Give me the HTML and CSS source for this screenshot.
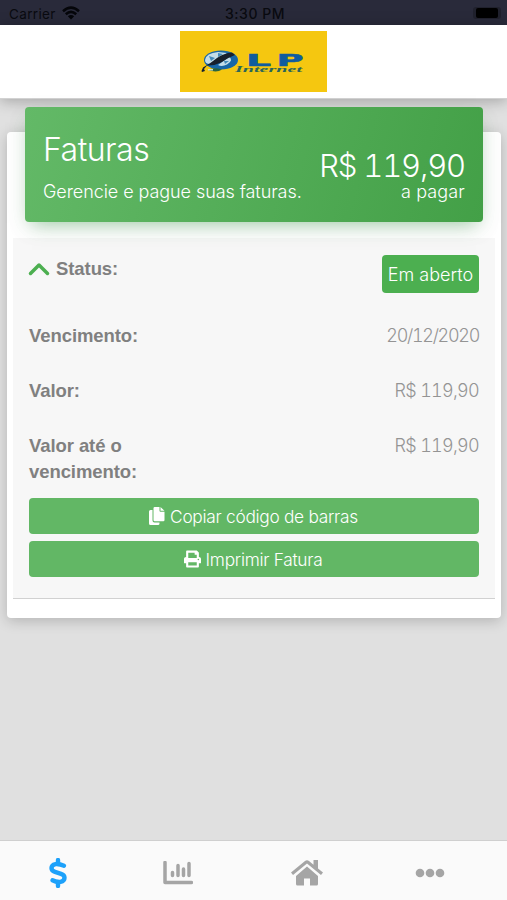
FILE: index.html
```html
<!DOCTYPE html>
<html lang="pt-BR">
<head>
<meta charset="utf-8">
<title>Faturas</title>
<link rel="stylesheet" href="styles.css">
</head>
<body>
<div class="status-bar">
  <div class="carrier"><span>Carrier</span>
    <svg class="wifi" viewBox="0 0 18 14"><path d="M1 5.2Q9-2 17 5.2" /><path d="M3.800 8.200Q9 3.600 14.200 8.200"/><path class="dot" d="M5.800 10.200Q9 7.600 12.200 10.200L9 13.600Z"/></svg>
  </div>
  <div class="clock">3:30 PM</div>
  <div class="battery"><span class="cell"></span></div>
</div>
<header class="header">
  <svg class="logo" viewBox="0 0 147 61">
    <rect width="147" height="61" fill="#f5c710"/>
    <ellipse cx="41" cy="29" rx="17" ry="9.500" fill="#1766a6"/>
    <path d="M25 29Q26 22 38 21L47 22 40 27 30 33Q25 33 25 29ZM38 34L49 26Q54 29 47 33.500 42 36 38 34Z" fill="#c4dde9"/>
    <path d="M29 25l6 2-4 3zM44 30l5 0-4 3zM38 22l5 1-5 3z" fill="#4389b9"/>
    <path d="M21.500 40L23 36.500Q31 32 37 27 44 22 52 21.500L55 24Q47 27 41 31.500 34 35 27 34.500L24 38 25 40 22 41Z" fill="#17202c"/>
    <path d="M28 39Q33 36 42 38.500 37 42 28 39Z" fill="#28643f"/><path d="M28 38h5v1.500h-5z" fill="#d6e5c7"/>
    <text class="logo-name" x="66" y="34.500" textLength="25" lengthAdjust="spacingAndGlyphs">L</text>
    <text class="logo-name" x="96.500" y="34.500" textLength="27" lengthAdjust="spacingAndGlyphs">P</text>
    <text class="logo-sub" x="55" y="41" textLength="67" lengthAdjust="spacingAndGlyphs">Internet</text>
  </svg>
</header>
<main class="content">
  <section class="card">
    <div class="card-header">
      <div class="heading"><h1 class="title">Faturas</h1><p class="subtitle">Gerencie e pague suas faturas.</p></div>
      <div class="total"><div class="amount">R$ 119,90</div><div class="caption">a pagar</div></div>
    </div>
    <div class="invoice">
      <div class="row row-status">
        <div class="label with-icon"><svg class="chevron" viewBox="0 0 22 14"><path d="M2.500 11.500L11 3 19.500 11.500"/></svg><span>Status:</span></div>
        <span class="badge">Em aberto</span>
      </div>
      <div class="row"><div class="label">Vencimento:</div><div class="value date">20/12/2020</div></div>
      <div class="row"><div class="label">Valor:</div><div class="value">R$ 119,90</div></div>
      <div class="row row-tall"><div class="label">Valor até o vencimento:</div><div class="value">R$ 119,90</div></div>
      <button class="button copy"><svg viewBox="0 0 16 18"><path d="M4 3H2Q.5 3 .5 4.500V16.500Q.5 18 2 18H9.500Q11 18 11 16.500V15.500H6Q4 15.500 4 13.500Z"/><path d="M6.200 0H11V3.800Q11 4.700 12 4.700H16V13Q16 14.200 14.800 14.200H6.200Q5 14.200 5 13V1.200Q5 0 6.200 0ZM12 0L16 3.800H12Z"/></svg><span>Copiar código de barras</span></button>
      <button class="button print"><svg viewBox="0 0 512 512"><path d="M448 192V77.250c0-8.490-3.370-16.620-9.370-22.630L393.370 9.370c-6-6-14.140-9.370-22.630-9.370H96C78.330 0 64 14.330 64 32v160c-35.350 0-64 28.650-64 64v112c0 8.840 7.160 16 16 16h48v96c0 17.670 14.330 32 32 32h320c17.670 0 32-14.330 32-32v-96h48c8.840 0 16-7.160 16-16V256c0-35.350-28.650-64-64-64zm-64 256H128v-96h256v96zm0-224H128V64h192v48c0 8.840 7.160 16 16 16h48v96zm48 72c-13.250 0-24-10.750-24-24 0-13.260 10.750-24 24-24s24 10.740 24 24c0 13.250-10.750 24-24 24z"/></svg><span>Imprimir Fatura</span></button>
    </div>
  </section>
</main>
<nav class="tabs">
  <a class="tab active"><svg class="dollar" viewBox="0 0 18 30"><path class="stem" d="M9 2V6M9 24V28"/><path class="curve" d="M15 7.700Q10 5.500 6.500 6.100 2.500 7 2.500 10 2.500 12.800 6 13.900L12 15.800Q15.500 17 15.500 19.700 15.500 23 11.500 23.900 7.500 24.500 3.500 22.300"/></svg></a>
  <a class="tab"><svg class="chart" viewBox="0 0 30 24"><path class="axis" d="M2 1.500V21.500H28.500"/><path class="bars" d="M9.500 11.500V14.500M15 4.500V14.500M20.500 8V14.500M26 2.500V14.500"/></svg></a>
  <a class="tab"><svg class="home" viewBox="0 0 34 28"><path d="M17 7.500L28 17V25Q28 26.500 26.500 26.500H20V19.500H14V26.500H7.500Q6 26.500 6 25V17Z"/><path d="M1 13.500L15 2Q17 .5 19 2L23.500 5.700V1H28V9.500L33 13.500 31 16 17 4.600 3 16Z"/></svg></a>
  <a class="tab"><svg class="more" viewBox="0 0 30 10"><circle cx="5" cy="5" r="4.300"/><circle cx="15" cy="5" r="4.300"/><circle cx="25" cy="5" r="4.300"/></svg></a>
</nav>
</body>
</html>
```
FILE: styles.css
```css
* { box-sizing: border-box; }
body { margin: 0; height: 900px; display: flex; flex-direction: column; overflow: hidden; background: #e0e0e0; font-family: "Liberation Sans", sans-serif; font-size: 18.5px; }
svg { display: block; flex: none; }
h1, p { margin: 0; font-weight: 300; }
.status-bar { height: 25px; flex: none; display: grid; grid-template-columns: 1fr auto 1fr; align-items: center; padding: 2px 6px 0 9px; background: #292a3a; color: #090a10; font-family: Inter, sans-serif; font-size: 13.5px; }
.carrier { display: flex; align-items: center; gap: 6px; letter-spacing: .35px; }
.wifi { width: 18px; height: 14px; margin-top: -2px; fill: none; stroke: #05060a; stroke-width: 2.5; }
.wifi .dot { fill: #05060a; stroke: none; }
.clock { font-weight: 500; font-size: 14px; letter-spacing: .5px; }
.battery { justify-self: end; width: 28px; height: 12px; margin-top: -2px; padding: 1px 3px; border-radius: 3px; background: #20212d; }
.cell { display: block; height: 10px; border-radius: 2px; background: #000; }
.header { height: 74px; flex: none; display: flex; justify-content: center; padding-top: 6px; background: #fff; border-bottom: 1px solid #d2d2d2; box-shadow: 0 2px 14px rgba(0,0,0,.28); }
.logo { width: 147px; height: 61px; }
.logo-name { font: bold 16px "DejaVu Sans", sans-serif; fill: #0f5c9e; stroke: #0f5c9e; stroke-width: .5; }
.logo-sub { font: italic bold 8.5px "Liberation Serif", serif; fill: #2a6558; }
.content { flex: 1; padding: 33px 6px 0 7px; }
.card { height: 486px; padding: 0 6px; background: #fff; border-radius: 4px; box-shadow: 0 3px 14px rgba(0,0,0,.2); }
.card-header { position: relative; z-index: 1; top: -25px; height: 115px; margin: 0 12px -25px; padding: 0 18px; display: flex; justify-content: space-between; background: linear-gradient(105deg, #63b967, #43a047); color: #fff; border-radius: 4px; box-shadow: 0 8px 18px -7px rgba(60,160,75,.5), 0 8px 24px rgba(0,0,0,.05); font-family: Inter, sans-serif; font-weight: 300; }
.title { padding-top: 23px; font-size: 32px; line-height: 39px; letter-spacing: -.5px; }
.subtitle { padding-top: 10px; font-size: 18px; line-height: 26px; letter-spacing: -.07px; white-space: nowrap; }
.total { padding-top: 41px; text-align: right; white-space: nowrap; }
.amount { font-size: 31px; line-height: 36px; letter-spacing: -1.15px; font-variant-numeric: tabular-nums; }
.caption { font-size: 18px; line-height: 15px; letter-spacing: .15px; }
.invoice { margin-top: 16px; height: 361px; padding: 17px 16px 0; background: #f7f7f7; border-bottom: 1px solid #d1d1d1; }
.row { display: flex; justify-content: space-between; align-items: flex-start; height: 55px; line-height: 25.5px; }
.row-status { height: 68px; }
.row-tall { height: 65px; }
.label { width: 130px; color: #808080; font-weight: 700; letter-spacing: -.08px; }
.with-icon { display: flex; align-items: center; gap: 6px; padding-top: 1px; }
.chevron { width: 22px; height: 14px; margin: 1px 0 0 -1px; fill: none; stroke: #4caf50; stroke-width: 3.5; stroke-linecap: round; stroke-linejoin: round; }
.value { color: #949494; font-family: Inter, sans-serif; font-weight: 300; font-size: 18px; white-space: nowrap; letter-spacing: -.7px; font-variant-numeric: tabular-nums; }
.date { letter-spacing: -1.3px; }
.badge { width: 97px; height: 38px; display: flex; align-items: center; justify-content: center; padding-top: 1px; background: #4caf50; color: #fff; border-radius: 4px; font-family: Inter, sans-serif; font-weight: 300; font-size: 18px; white-space: nowrap; }
.button { width: 100%; height: 36px; margin: 0 0 7px; padding: 0 2px 0 0; display: flex; align-items: center; justify-content: center; gap: 5px; border: 0; border-radius: 4px; background: #62b765; color: #fff; font-family: Inter, sans-serif; font-weight: 300; font-size: 17.3px; letter-spacing: -.27px; }
.button svg { width: 17px; height: 18px; fill: #fff; }
.tabs { height: 60px; flex: none; display: grid; grid-template-columns: 116px 124px 133px 114px; padding: 4px 0 0; background: #fafafa; border-top: 1px solid #cfcfcf; }
.tab { display: flex; align-items: center; justify-content: center; color: #a5a5a5; }
.active { color: #1da1fa; }
.dollar { width: 18px; height: 30px; fill: none; stroke: currentColor; stroke-width: 4.4; stroke-linecap: round; }
.chart { width: 30px; height: 24px; fill: none; stroke: currentColor; stroke-width: 3.5; stroke-linecap: round; stroke-linejoin: round; }
.home { width: 34px; height: 28px; fill: currentColor; }
.more { width: 30px; height: 10px; fill: currentColor; }
```
